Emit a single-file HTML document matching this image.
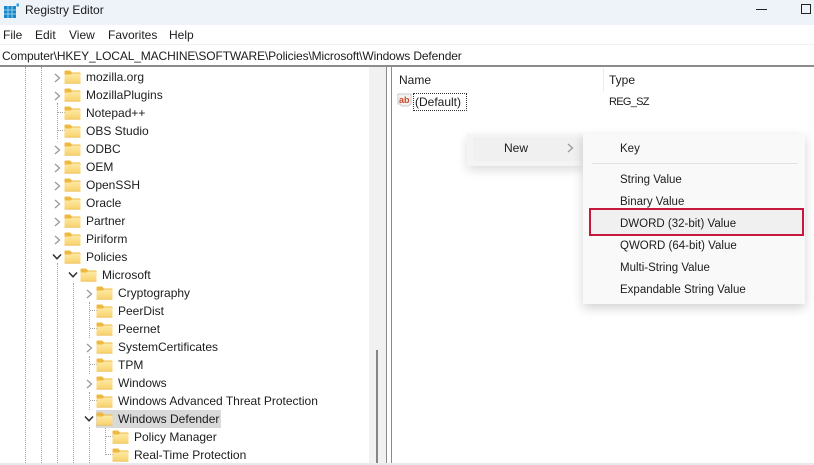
<!DOCTYPE html>
<html><head><meta charset="utf-8"><style>
html,body{margin:0;padding:0}
body{width:814px;height:465px;overflow:hidden;background:#fff;position:relative;font-family:"Liberation Sans",sans-serif;font-size:12px;color:#1c1c1c}
.a{position:absolute}
.t{position:absolute;white-space:nowrap;line-height:16px;height:16px;letter-spacing:0}
.m{font-size:11.5px;margin-top:1px}
.d{position:absolute;width:0;border-left:1px dotted #a0a0a0}
.h{position:absolute;height:0;width:7px;border-top:1px dotted #a0a0a0}
svg{position:absolute;overflow:visible}
</style></head><body>
<svg width="0" height="0" style="position:absolute"><defs>
<linearGradient id="g" x1="0" y1="0" x2="0" y2="1"><stop offset="0" stop-color="#fde9a6"/><stop offset="1" stop-color="#f8d26c"/></linearGradient>
<symbol id="f" viewBox="0 0 17 14"><path d="M0.5 1.5Q0.5 .5 1.5 .5H6L8 2.5H15.5Q16.5 2.5 16.5 3.5V5H.5Z" fill="#efb83f"/><path d="M.5 4.5L6.5 4.5L8 3.5H15.5Q16.5 3.5 16.5 4.5V12.5Q16.5 13.5 15.5 13.5H1.5Q.5 13.5 .5 12.5Z" fill="url(#g)"/><path d="M.5 12.8H16.5V13.6H.5Z" fill="#ecbb4a"/></symbol>
<symbol id="r" viewBox="0 0 8 10"><path d="M2 1L6.5 5L2 9" fill="none" stroke="#9a9a9a" stroke-width="1.3"/></symbol>
<symbol id="v" viewBox="0 0 10 8"><path d="M1 1.5L5 5.8L9 1.5" fill="none" stroke="#303030" stroke-width="1.5"/></symbol>
</defs></svg>

<div class="a" style="left:0;top:0;width:814px;height:25px;background:#eef2f9"></div>
<svg style="left:4px;top:3px" width="15" height="15" viewBox="0 0 15 15">
<rect x="0" y="3" width="12" height="12" fill="#1a86c8"/>
<path d="M4 3V15M8 3V15M0 7H12M0 11H12" stroke="#8fd0ee" stroke-width="1"/>
<rect x="12.5" y="0.5" width="2.5" height="3" fill="#2f9fd8"/></svg>
<div class="t" style="left:25px;top:2px">Registry Editor</div>
<div class="a" style="left:756px;top:9px;width:11px;height:1px;background:#222"></div>
<div class="a" style="left:801px;top:4px;width:8px;height:8px;border:1px solid #222"></div>

<div class="t" style="left:3px;top:27px">File</div>
<div class="t" style="left:35px;top:27px">Edit</div>
<div class="t" style="left:69px;top:27px">View</div>
<div class="t" style="left:108px;top:27px">Favorites</div>
<div class="t" style="left:169px;top:27px">Help</div>
<div class="a" style="left:0;top:44px;width:814px;height:1px;background:#f0f0f0"></div>
<div class="t" style="left:2px;top:48px;letter-spacing:-.13px">Computer\HKEY_LOCAL_MACHINE\SOFTWARE\Policies\Microsoft\Windows Defender</div>
<div class="a" style="left:0;top:65px;width:814px;height:2px;background:#8c8c8c"></div>

<div class="a" style="left:369px;top:67px;width:17px;height:396px;background:#f1f1f1"></div>
<div class="a" style="left:376px;top:350px;width:2px;height:113px;background:#858585"></div>
<div class="a" style="left:386px;top:67px;width:1px;height:396px;background:#8a8a8a"></div>
<div class="a" style="left:391px;top:67px;width:1px;height:396px;background:#8a8a8a"></div>
<div class="a" style="left:0;top:463px;width:814px;height:2px;background:#e8eaec"></div>

<div class="d" style="left:25px;top:67px;height:396px"></div>
<div class="d" style="left:41px;top:67px;height:396px"></div>
<div class="d" style="left:57px;top:103px;height:36px"></div>
<div class="d" style="left:57px;top:263px;height:200px"></div>
<div class="d" style="left:73px;top:283px;height:180px"></div>
<div class="d" style="left:89px;top:302px;height:36px"></div>
<div class="d" style="left:89px;top:356px;height:18px"></div>
<div class="d" style="left:89px;top:392px;height:18px"></div>
<div class="d" style="left:89px;top:427px;height:36px"></div>
<div class="d" style="left:105px;top:427px;height:28px"></div>
<div class="h" style="left:58px;top:112px"></div>
<div class="h" style="left:58px;top:130px"></div>
<div class="h" style="left:90px;top:310px"></div>
<div class="h" style="left:90px;top:328px"></div>
<div class="h" style="left:90px;top:364px"></div>
<div class="h" style="left:90px;top:400px"></div>
<div class="h" style="left:106px;top:436px"></div>
<div class="h" style="left:106px;top:454px"></div>

<div class="a" style="left:96px;top:410px;width:125px;height:18px;background:#d9d9d9"></div>

<svg style="left:53px;top:73px" width="8" height="10"><use href="#r" width="8" height="10"/></svg>
<svg style="left:53px;top:91px" width="8" height="10"><use href="#r" width="8" height="10"/></svg>
<svg style="left:53px;top:145px" width="8" height="10"><use href="#r" width="8" height="10"/></svg>
<svg style="left:53px;top:163px" width="8" height="10"><use href="#r" width="8" height="10"/></svg>
<svg style="left:53px;top:181px" width="8" height="10"><use href="#r" width="8" height="10"/></svg>
<svg style="left:53px;top:199px" width="8" height="10"><use href="#r" width="8" height="10"/></svg>
<svg style="left:53px;top:217px" width="8" height="10"><use href="#r" width="8" height="10"/></svg>
<svg style="left:53px;top:235px" width="8" height="10"><use href="#r" width="8" height="10"/></svg>
<svg style="left:52px;top:253px" width="10" height="8"><use href="#v" width="10" height="8"/></svg>
<svg style="left:68px;top:271px" width="10" height="8"><use href="#v" width="10" height="8"/></svg>
<svg style="left:85px;top:289px" width="8" height="10"><use href="#r" width="8" height="10"/></svg>
<svg style="left:85px;top:343px" width="8" height="10"><use href="#r" width="8" height="10"/></svg>
<svg style="left:85px;top:379px" width="8" height="10"><use href="#r" width="8" height="10"/></svg>
<svg style="left:84px;top:415px" width="10" height="8"><use href="#v" width="10" height="8"/></svg>

<svg style="left:64px;top:70px" width="17" height="14"><use href="#f" width="17" height="14"/></svg><div class="t" style="left:86px;top:69px">mozilla.org</div>
<svg style="left:64px;top:88px" width="17" height="14"><use href="#f" width="17" height="14"/></svg><div class="t" style="left:86px;top:87px">MozillaPlugins</div>
<svg style="left:64px;top:106px" width="17" height="14"><use href="#f" width="17" height="14"/></svg><div class="t" style="left:86px;top:105px">Notepad++</div>
<svg style="left:64px;top:124px" width="17" height="14"><use href="#f" width="17" height="14"/></svg><div class="t" style="left:86px;top:123px">OBS Studio</div>
<svg style="left:64px;top:142px" width="17" height="14"><use href="#f" width="17" height="14"/></svg><div class="t" style="left:86px;top:141px">ODBC</div>
<svg style="left:64px;top:160px" width="17" height="14"><use href="#f" width="17" height="14"/></svg><div class="t" style="left:86px;top:159px">OEM</div>
<svg style="left:64px;top:178px" width="17" height="14"><use href="#f" width="17" height="14"/></svg><div class="t" style="left:86px;top:177px">OpenSSH</div>
<svg style="left:64px;top:196px" width="17" height="14"><use href="#f" width="17" height="14"/></svg><div class="t" style="left:86px;top:195px">Oracle</div>
<svg style="left:64px;top:214px" width="17" height="14"><use href="#f" width="17" height="14"/></svg><div class="t" style="left:86px;top:213px">Partner</div>
<svg style="left:64px;top:232px" width="17" height="14"><use href="#f" width="17" height="14"/></svg><div class="t" style="left:86px;top:231px">Piriform</div>
<svg style="left:64px;top:250px" width="17" height="14"><use href="#f" width="17" height="14"/></svg><div class="t" style="left:86px;top:249px">Policies</div>
<svg style="left:80px;top:268px" width="17" height="14"><use href="#f" width="17" height="14"/></svg><div class="t" style="left:102px;top:267px">Microsoft</div>
<svg style="left:96px;top:286px" width="17" height="14"><use href="#f" width="17" height="14"/></svg><div class="t" style="left:118px;top:285px">Cryptography</div>
<svg style="left:96px;top:304px" width="17" height="14"><use href="#f" width="17" height="14"/></svg><div class="t" style="left:118px;top:303px">PeerDist</div>
<svg style="left:96px;top:322px" width="17" height="14"><use href="#f" width="17" height="14"/></svg><div class="t" style="left:118px;top:321px">Peernet</div>
<svg style="left:96px;top:340px" width="17" height="14"><use href="#f" width="17" height="14"/></svg><div class="t" style="left:118px;top:339px">SystemCertificates</div>
<svg style="left:96px;top:358px" width="17" height="14"><use href="#f" width="17" height="14"/></svg><div class="t" style="left:118px;top:357px">TPM</div>
<svg style="left:96px;top:376px" width="17" height="14"><use href="#f" width="17" height="14"/></svg><div class="t" style="left:118px;top:375px">Windows</div>
<svg style="left:96px;top:394px" width="17" height="14"><use href="#f" width="17" height="14"/></svg><div class="t" style="left:118px;top:393px">Windows Advanced Threat Protection</div>
<svg style="left:96px;top:412px" width="17" height="14"><use href="#f" width="17" height="14"/></svg><div class="t" style="left:118px;top:411px">Windows Defender</div>
<svg style="left:112px;top:430px" width="17" height="14"><use href="#f" width="17" height="14"/></svg><div class="t" style="left:134px;top:429px">Policy Manager</div>
<svg style="left:112px;top:448px" width="17" height="14"><use href="#f" width="17" height="14"/></svg><div class="t" style="left:134px;top:447px">Real-Time Protection</div>

<div class="t" style="left:399px;top:72px">Name</div>
<div class="a" style="left:603px;top:68px;width:1px;height:24px;background:#ececec"></div>
<div class="t" style="left:609px;top:72px">Type</div>
<svg style="left:397px;top:93px" width="16" height="16" viewBox="0 0 16 16"><path d="M1 1H14V11L11 13H5L3 11H1Z" fill="#f5f2f0" stroke="#c9c9c9"/></svg>
<div class="a" style="left:399px;top:94px;font:bold 9px/12px 'Liberation Sans',sans-serif;color:#c9472b">ab</div>
<div class="a" style="left:413px;top:93px;width:52px;height:16px;border:1px dotted #333"></div>
<div class="t" style="left:415px;top:94px">(Default)</div>
<div class="t" style="left:609px;top:94px;font-size:11px;letter-spacing:-.7px">REG_SZ</div>

<div class="a" style="left:467px;top:134px;width:116px;height:32px;background:#f4f4f4;box-shadow:0 4px 10px rgba(0,0,0,.14)"></div>
<div class="a" style="left:473px;top:137px;width:110px;height:24px;background:#f0f0f0"></div>
<div class="t" style="left:504px;top:140px">New</div>
<svg style="left:566px;top:143px" width="8" height="10"><use href="#r" width="8" height="10"/></svg>

<div class="a" style="left:583px;top:134px;width:222px;height:170px;background:#f9f9f9;box-shadow:0 4px 10px rgba(0,0,0,.18)"></div>
<div class="t m" style="left:620px;top:140px">Key</div>
<div class="a" style="left:592px;top:163px;width:206px;height:1px;background:#e2e2e2"></div>
<div class="t m" style="left:620px;top:171px">String Value</div>
<div class="t m" style="left:620px;top:193px">Binary Value</div>
<div class="a" style="left:589px;top:208px;width:211px;height:24px;background:#f0f0f0;border:2px solid #c8173f"></div>
<div class="t m" style="left:620px;top:215px">DWORD (32-bit) Value</div>
<div class="t m" style="left:620px;top:237px">QWORD (64-bit) Value</div>
<div class="t m" style="left:620px;top:259px">Multi-String Value</div>
<div class="t m" style="left:620px;top:281px">Expandable String Value</div>
</body></html>
